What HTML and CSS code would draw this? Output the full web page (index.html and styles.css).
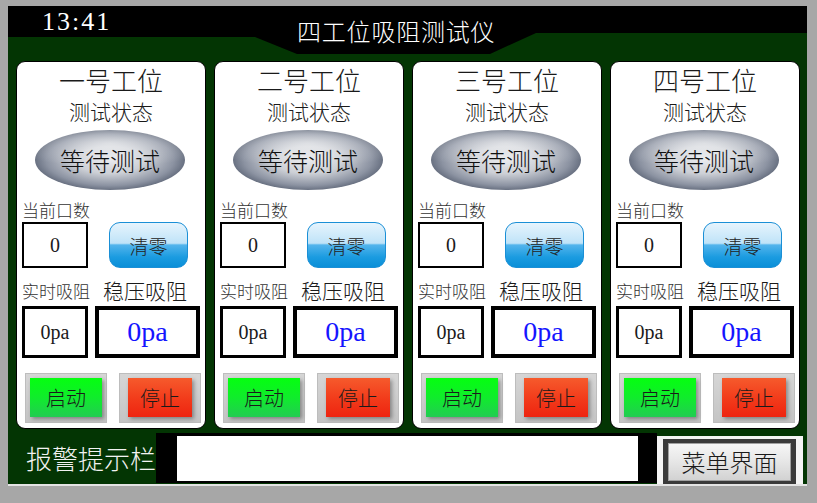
FILE: index.html
```html
<!DOCTYPE html>
<html lang="zh-CN">
<head>
<meta charset="utf-8">
<title>四工位吸阻测试仪</title>
<link rel="stylesheet" href="styles.css">
</head>
<body>
<div class="frame">
  <header class="header">
    <div class="time">13:41</div>
    <div class="title">四工位吸阻测试仪</div>
  </header>
  <main class="cards">
    <section class="card">
      <div class="st-name">一号工位</div>
      <div class="st-sub">测试状态</div>
      <div class="status">等待测试</div>
      <div class="lbl">当前口数</div>
      <div class="row-count">
        <div class="box-count">0</div>
        <div class="btn-clear">清零</div>
      </div>
      <div class="row-labels">
        <span class="lbl-small">实时吸阻</span>
        <span class="lbl-big">稳压吸阻</span>
      </div>
      <div class="row-values">
        <div class="box-rt">0pa</div>
        <div class="box-st">0pa</div>
      </div>
      <div class="row-btns">
        <div class="btn-wrap"><div class="btn-start">启动</div></div>
        <div class="btn-wrap"><div class="btn-stop">停止</div></div>
      </div>
    </section>
    <section class="card">
      <div class="st-name">二号工位</div>
      <div class="st-sub">测试状态</div>
      <div class="status">等待测试</div>
      <div class="lbl">当前口数</div>
      <div class="row-count">
        <div class="box-count">0</div>
        <div class="btn-clear">清零</div>
      </div>
      <div class="row-labels">
        <span class="lbl-small">实时吸阻</span>
        <span class="lbl-big">稳压吸阻</span>
      </div>
      <div class="row-values">
        <div class="box-rt">0pa</div>
        <div class="box-st">0pa</div>
      </div>
      <div class="row-btns">
        <div class="btn-wrap"><div class="btn-start">启动</div></div>
        <div class="btn-wrap"><div class="btn-stop">停止</div></div>
      </div>
    </section>
    <section class="card">
      <div class="st-name">三号工位</div>
      <div class="st-sub">测试状态</div>
      <div class="status">等待测试</div>
      <div class="lbl">当前口数</div>
      <div class="row-count">
        <div class="box-count">0</div>
        <div class="btn-clear">清零</div>
      </div>
      <div class="row-labels">
        <span class="lbl-small">实时吸阻</span>
        <span class="lbl-big">稳压吸阻</span>
      </div>
      <div class="row-values">
        <div class="box-rt">0pa</div>
        <div class="box-st">0pa</div>
      </div>
      <div class="row-btns">
        <div class="btn-wrap"><div class="btn-start">启动</div></div>
        <div class="btn-wrap"><div class="btn-stop">停止</div></div>
      </div>
    </section>
    <section class="card">
      <div class="st-name">四号工位</div>
      <div class="st-sub">测试状态</div>
      <div class="status">等待测试</div>
      <div class="lbl">当前口数</div>
      <div class="row-count">
        <div class="box-count">0</div>
        <div class="btn-clear">清零</div>
      </div>
      <div class="row-labels">
        <span class="lbl-small">实时吸阻</span>
        <span class="lbl-big">稳压吸阻</span>
      </div>
      <div class="row-values">
        <div class="box-rt">0pa</div>
        <div class="box-st">0pa</div>
      </div>
      <div class="row-btns">
        <div class="btn-wrap"><div class="btn-start">启动</div></div>
        <div class="btn-wrap"><div class="btn-stop">停止</div></div>
      </div>
    </section>
  </main>
  <footer class="bottom">
    <div class="alarm-lbl">报警提示栏</div>
    <div class="alarm-box"><div class="alarm-inner"></div></div>
    <div class="menu-area">
      <div class="menu-frame"><div class="menu-btn">菜单界面</div></div>
    </div>
  </footer>
</div>
</body>
</html>
```
FILE: styles.css
```css
html, body {
  margin: 0;
  padding: 0;
}
body {
  width: 817px;
  height: 503px;
  overflow: hidden;
  background: #a7a7a7;
  font-family: "Noto Sans CJK SC", "Noto Sans", sans-serif;
  font-weight: 300;
  color: #1a1a1a;
}
.frame {
  margin: 6px 0 0 8px;
  width: 799px;
  height: 478px;
  background: #033503;
  border-bottom: 2px solid #e4e4e4;
  display: flex;
  flex-direction: column;
}
.header {
  height: 48px;
  background: #000;
  clip-path: polygon(0 0, 799px 0, 799px 27px, 528px 27px, 482px 48px, 289px 48px, 247px 31px, 0 31px);
  display: flex;
  align-items: flex-start;
  color: #fff;
  flex-shrink: 0;
}
.time {
  width: 289px;
  box-sizing: border-box;
  padding: 3px 0 0 34px;
  font-family: "Liberation Serif", serif;
  font-weight: 400;
  font-size: 26px;
  line-height: 26px;
  letter-spacing: 2px;
}
.title {
  padding-top: 13px;
  font-size: 24px;
  line-height: 24px;
  letter-spacing: 0.8px;
}
.cards {
  margin-top: 7px;
  padding-left: 8px;
  display: grid;
  grid-template-columns: repeat(4, 190px);
  gap: 8px;
  flex-shrink: 0;
}
.card {
  height: 368px;
  box-sizing: border-box;
  background: #fff;
  border: 1px solid #000;
  border-radius: 9px;
  display: flex;
  flex-direction: column;
  padding: 5px 0 0 5px;
}
.st-name {
  font-size: 26px;
  line-height: 26px;
  text-align: center;
  margin-right: 5px;
}
.st-sub {
  margin-top: 8px;
  font-size: 21px;
  line-height: 21px;
  text-align: center;
  margin-right: 5px;
}
.status {
  margin: 8px 0 0 13px;
  width: 150px;
  height: 60px;
  border-radius: 50%;
  background:
    radial-gradient(ellipse 70% 40% at 50% 22%, rgba(255,255,255,0.5), rgba(255,255,255,0) 100%),
    radial-gradient(ellipse at 50% 50%, #e6e7eb 0%, #cdd0d6 32%, #8c93a2 60%, #4a5365 80%, #727b8d 91%, #d8dce4 100%);
  display: flex;
  align-items: center;
  justify-content: center;
  font-size: 25px;
  line-height: 25px;
  color: #111;
}
.lbl {
  margin-top: 11px;
  font-size: 17px;
  line-height: 17px;
  color: #333;
}
.row-count {
  margin-top: 4px;
  display: flex;
  align-items: stretch;
  height: 46px;
}
.box-count {
  width: 66px;
  box-sizing: border-box;
  border: 2px solid #000;
  display: flex;
  align-items: center;
  justify-content: center;
  font-family: "Liberation Serif", serif;
  font-weight: 400;
  font-size: 20px;
}
.btn-clear {
  margin-left: 21px;
  width: 79px;
  box-sizing: border-box;
  border: 1px solid #1a8fd6;
  border-radius: 11px;
  background: linear-gradient(to bottom, #e6f4fd 0%, #bfe3f8 46%, #52b4ec 50%, #1a9be0 78%, #0a8fd8 100%);
  display: flex;
  align-items: center;
  justify-content: center;
  font-size: 19px;
  color: #222;
}
.row-labels {
  margin-top: 11px;
  height: 22px;
  display: flex;
  align-items: center;
}
.lbl-small {
  font-size: 17px;
  line-height: 17px;
  color: #333;
}
.lbl-big {
  margin-left: 13px;
  font-size: 21px;
  line-height: 21px;
}
.row-values {
  margin-top: 5px;
  display: flex;
  height: 52px;
}
.box-rt {
  width: 66px;
  box-sizing: border-box;
  border: 3px solid #000;
  display: flex;
  align-items: center;
  justify-content: center;
  font-family: "Liberation Serif", serif;
  font-weight: 400;
  font-size: 20px;
}
.box-st {
  margin-left: 7px;
  width: 105px;
  box-sizing: border-box;
  border: 4px solid #000;
  display: flex;
  align-items: center;
  justify-content: center;
  font-family: "Liberation Serif", serif;
  font-weight: 400;
  font-size: 28px;
  color: #1515ff;
}
.row-btns {
  margin-top: 15px;
  margin-left: 3px;
  display: flex;
  gap: 12px;
  height: 50px;
}
.btn-wrap {
  width: 82px;
  box-sizing: border-box;
  background: linear-gradient(to bottom, #d6d6d6, #c4c4c4);
  border: 1px solid #bdbdbd;
  padding: 4px 4px 5px 4px;
  display: flex;
}
.btn-start, .btn-stop {
  flex: 1;
  display: flex;
  align-items: center;
  justify-content: center;
  font-size: 20px;
  color: #1a1a1a;
  box-shadow: 2px 2px 4px rgba(0,0,0,0.35);
}
.btn-start {
  background: linear-gradient(to bottom, #05ff10 0%, #10ec2c 50%, #22cc52 100%);
}
.btn-stop {
  margin: 0 4px;
  background: linear-gradient(to bottom, #f65a2c 0%, #f23a1a 55%, #ee2410 100%);
}
.bottom {
  margin-top: 4px;
  display: flex;
  height: 51px;
}
.alarm-lbl {
  width: 148px;
  box-sizing: border-box;
  padding-left: 18px;
  display: flex;
  align-items: center;
  font-size: 26px;
  line-height: 26px;
  color: #f2f2f2;
  height: 50px;
}
.alarm-box {
  width: 501px;
  height: 50px;
  box-sizing: border-box;
  background: #000;
  padding: 3px 19px 2px 21px;
  display: flex;
}
.alarm-inner {
  flex: 1;
  background: #fff;
}
.menu-area {
  margin-top: 3px;
  width: 146px;
  background: #f4f4f4;
  box-sizing: border-box;
  padding: 3px 7px 0 6px;
  display: flex;
}
.menu-frame {
  flex: 1;
  background: #3a3a3a;
  padding: 4px 5px 3px 5px;
  display: flex;
}
.menu-btn {
  flex: 1;
  background: linear-gradient(to bottom, #f6f6f6 0%, #e6e6e6 50%, #d2d2d2 100%);
  border: 1px solid #a0a0a0;
  display: flex;
  align-items: center;
  justify-content: center;
  font-size: 24px;
  line-height: 24px;
  color: #1a1a1a;
}
```
